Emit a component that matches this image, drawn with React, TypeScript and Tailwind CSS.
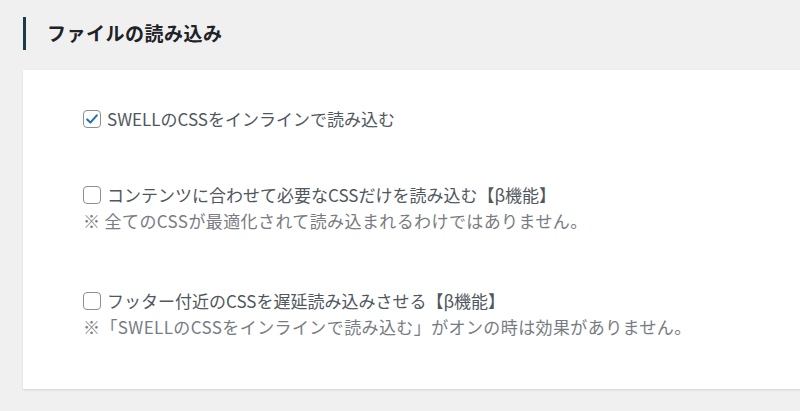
import React, { useState } from "react";

const font = { fontFamily: '"Noto Sans CJK JP", "Noto Sans", sans-serif' };

type Item = { label: string; note?: string; checked: boolean };

const initialItems: Item[] = [
  { label: "SWELLのCSSをインラインで読み込む", checked: true },
  {
    label: "コンテンツに合わせて必要なCSSだけを読み込む【β機能】",
    note: "※ 全てのCSSが最適化されて読み込まれるわけではありません。",
    checked: false,
  },
  {
    label: "フッター付近のCSSを遅延読み込みさせる【β機能】",
    note: "※「SWELLのCSSをインラインで読み込む」がオンの時は効果がありません。",
    checked: false,
  },
];

function Checkbox({ checked, onClick }: { checked: boolean; onClick: () => void }) {
  return (
    <button
      type="button"
      onClick={onClick}
      className="w-[18px] h-[18px] shrink-0 rounded-[4px] border border-[#8c8f94] bg-white flex items-center justify-center"
    >
      {checked && (
        <svg viewBox="0 0 20 20" className="w-[16px] h-[16px]">
          <path d="M4 10.5l4 4 8-9" fill="none" stroke="#2271b1" strokeWidth="2.6" strokeLinecap="round" strokeLinejoin="round" />
        </svg>
      )}
    </button>
  );
}

export default function App() {
  const [items, setItems] = useState(initialItems);

  const toggle = (i: number) =>
    setItems(items.map((it, idx) => (idx === i ? { ...it, checked: !it.checked } : it)));

  return (
    <div className="w-[800px] h-[411px] bg-[#f0f0f1] overflow-hidden" style={font}>
      {/* 見出し */}
      <div className="pl-[23px] pt-[17px] flex items-center">
        <div className="w-[3px] h-[33px] bg-[#1d3a47]" />
        <h2 className="ml-[21px] text-[19px] font-bold text-[#1d2327] tracking-[0.5px]">ファイルの読み込み</h2>
      </div>

      {/* 設定カード */}
      <div className="ml-[23px] mt-[20px] h-[319px] bg-white shadow-[0_1px_2px_rgba(0,0,0,0.12)] pl-[60px] pt-[40px]">
        <div className="flex flex-col gap-[58px]">
          {items.map((it, i) => (
            <div key={i}>
              <label className="flex items-center gap-[6px] h-[18px] cursor-pointer">
                <Checkbox checked={it.checked} onClick={() => toggle(i)} />
                <span className="text-[17px] text-[#50575e] whitespace-nowrap">{it.label}</span>
              </label>
              {it.note && (
                <p className="mt-[7px] mb-[3px] text-[17px] tracking-[0.4px] text-[#787c82] whitespace-nowrap leading-[20px]">
                  {it.note}
                </p>
              )}
            </div>
          ))}
        </div>
      </div>
    </div>
  );
}
